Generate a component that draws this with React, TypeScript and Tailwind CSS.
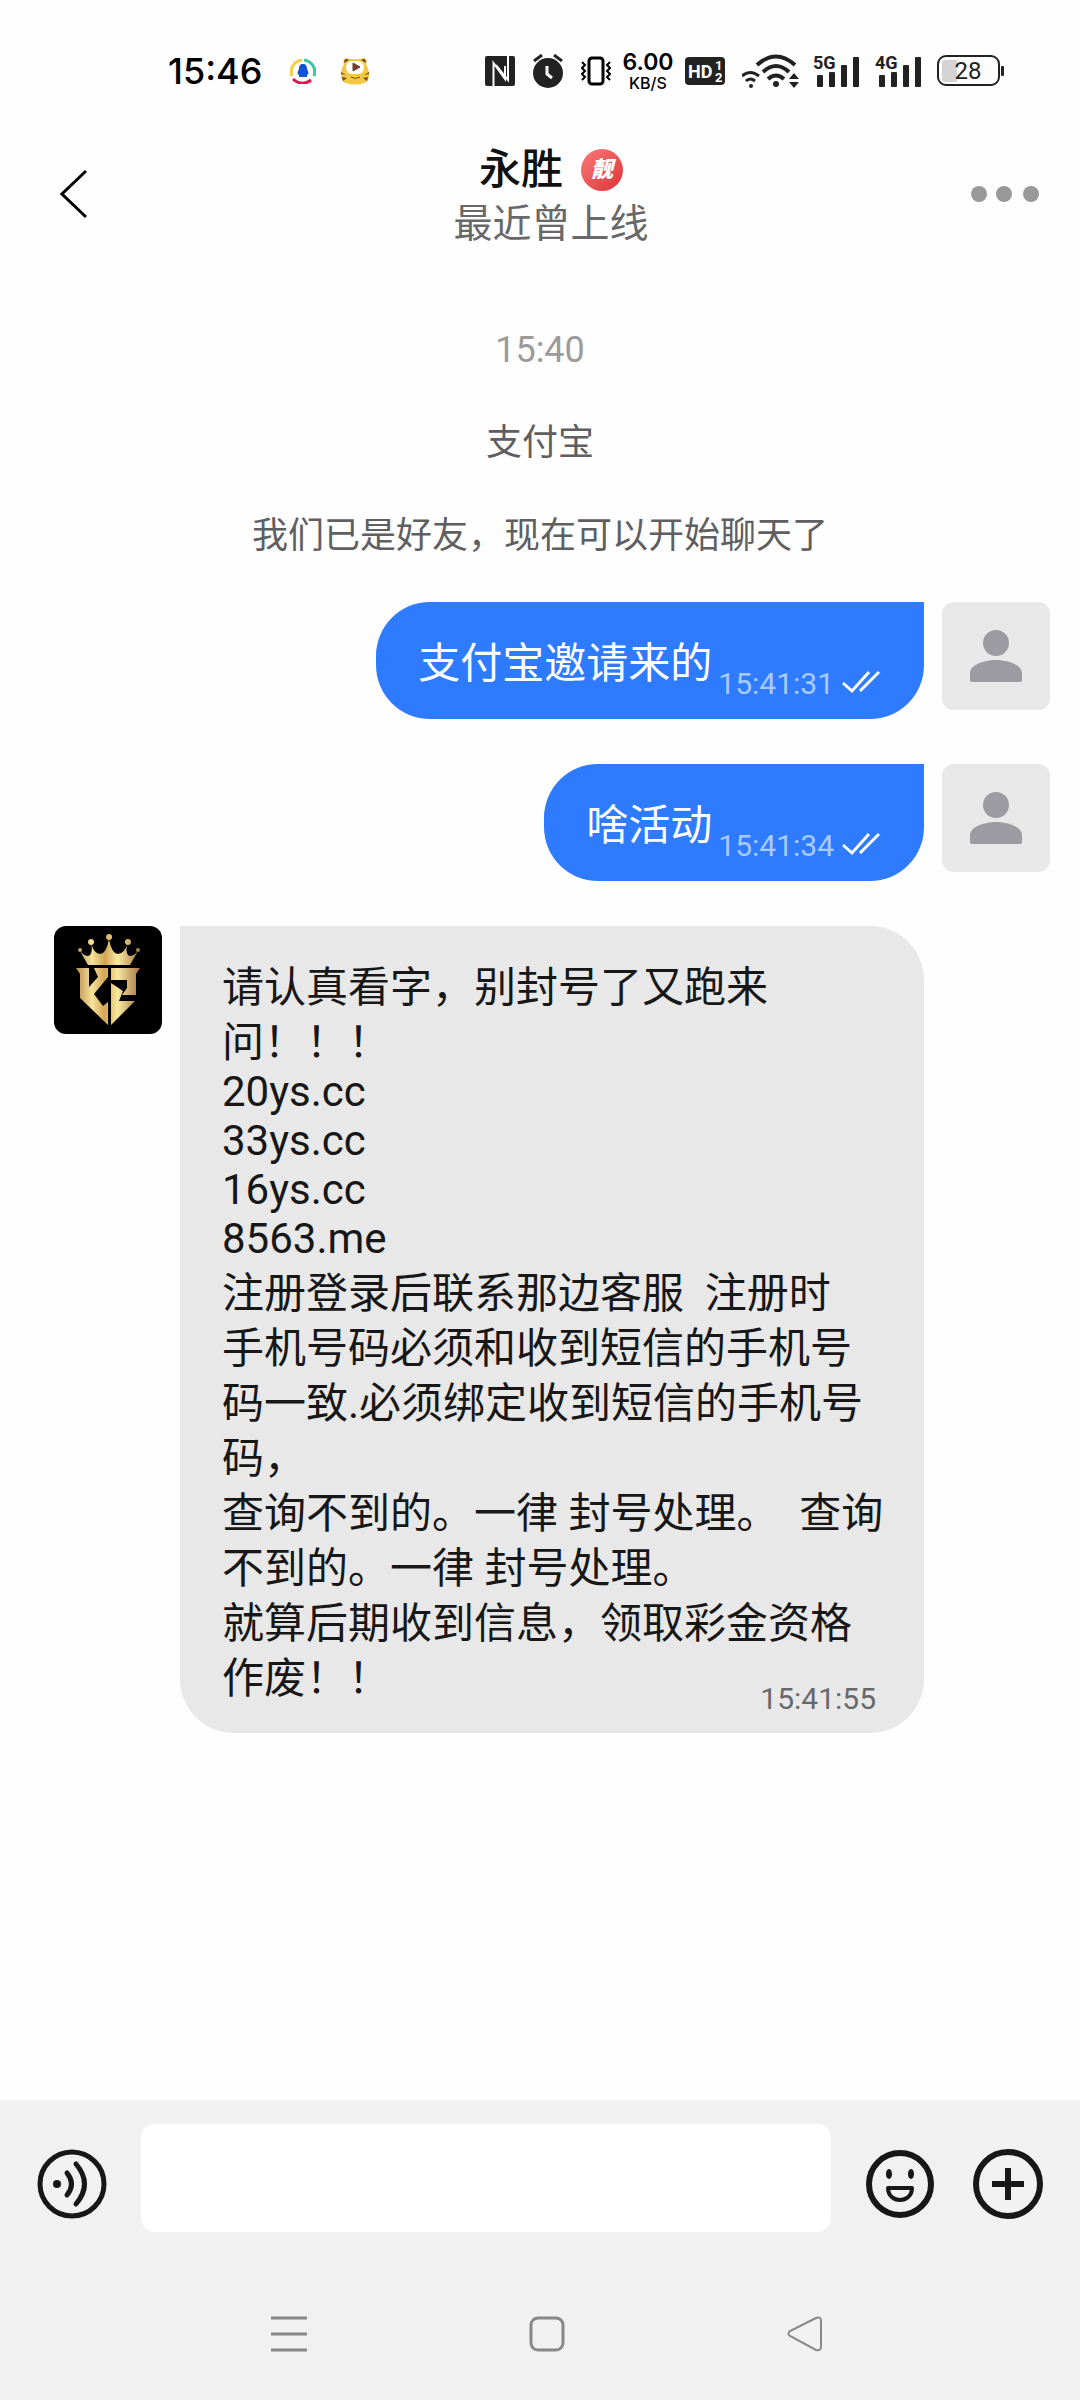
import { clsx } from "clsx"

const sentMessages = [
  { text: "支付宝邀请来的", time: "15:41:31" },
  { text: "啥活动", time: "15:41:34" },
]

const receivedLines = [
  "请认真看字，别封号了又跑来",
  "问！！！",
  "20ys.cc",
  "33ys.cc",
  "16ys.cc",
  "8563.me",
  "注册登录后联系那边客服  注册时",
  "手机号码必须和收到短信的手机号",
  "码一致.必须绑定收到短信的手机号",
  "码，",
  "查询不到的。一律 封号处理。  查询",
  "不到的。一律 封号处理。",
  "就算后期收到信息，领取彩金资格",
  "作废！！",
]

// latin-only lines sit tighter than chinese ones
const isLatin = (line: string) => /^[\x20-\x7e]+$/.test(line)

const Signal = ({ label }: { label: string }) => (
  <svg width="50" height="38" viewBox="0 -2 50 38" fill="#222">
    <text x="0" y="15" fontSize="18" fontWeight="700" fontFamily="Roboto, sans-serif">
      {label}
    </text>
    <rect x="4" y="21" width="6" height="12" rx="1" />
    <rect x="16" y="18" width="6" height="15" rx="1" />
    <rect x="28" y="11" width="6" height="22" rx="1" />
    <rect x="40" y="3" width="6" height="30" rx="1" />
  </svg>
)

const StatusBar = () => (
  <div className="flex h-[142px] items-center justify-between pl-[168px] pr-[76px]">
    <div className="flex items-center">
      <span className="w-[122px] font-['Inter'] text-[36px] font-medium leading-none text-black">15:46</span>
      <svg width="26" height="26" viewBox="0 0 26 26" fill="none" strokeWidth="3">
        <path d="M2 18A12 12 0 0 1 12 2" stroke="#f2cf45" />
        <path d="M14 2A12 12 0 0 1 24 18" stroke="#40c4a0" />
        <path d="M3 21A13 13 0 0 0 21 22" stroke="#e0184f" />
        <path d="M13 6c-3 0-4 2-4 5-1 2-2 4-1 6l1-1v3h8v-3l1 1c1-2 0-4-1-6 0-3-1-5-4-5z" fill="#1254d8" />
      </svg>
      <svg className="ml-6" width="30" height="28" viewBox="0 0 30 28">
        <path d="M4 7C2 2 5 0 9 2h12c4-2 7 0 5 5 3 5 4 12 2 16-3 6-23 6-26 0C0 19 1 12 4 7z" fill="#f5c842" />
        <path d="M4 6c0-4 2-5 5-3zM26 6c0-4-2-5-5-3zM1 15l5 3-5-1zM2 20l5 1-4 3zM29 15l-5 3 5-1zM28 20l-5 1 4 3z" fill="#76482a" />
        <rect x="6" y="4" width="18" height="13" rx="6" fill="#fff" />
        <path d="M13 6l7 4-7 4z" fill="#76402c" stroke="#76402c" strokeLinejoin="round" />
        <path d="M11 20q4 3 9 0" fill="none" stroke="#76402c" />
      </svg>
    </div>

    <div className="flex items-center gap-3">
      <svg width="36" height="30" viewBox="0 0 36 30">
        <rect width="30" height="30" rx="2" fill="#222" />
        <path d="M8.500 30V7L20 23V10M23 0v24L11 9" fill="none" stroke="#fff" strokeWidth="2" />
      </svg>
      <svg width="36" height="34" viewBox="0 0 36 34">
        <circle cx="15" cy="19" r="15" fill="#222" />
        <path d="M1 7l8-6M29 7l-8-6" stroke="#222" strokeWidth="3" />
        <path d="M14 12v8l5 4" fill="none" stroke="#fff" strokeWidth="3" />
      </svg>
      <svg width="30" height="30" viewBox="0 0 30 30" fill="none" stroke="#000">
        <rect x="8" y="2" width="14" height="26" rx="3" strokeWidth="3" />
        <path d="M1 7l3 3-3 3 3 3-3 3 3 3-3 3M29 7l-3 3 3 3-3 3 3 3-3 3 3 3" strokeWidth="2" transform="translate(0 -1)" />
      </svg>
      <div className="flex w-[50px] flex-col items-center font-['Inter'] text-black">
        <span className="text-[23px] font-semibold leading-[23px]">6.00</span>
        <span className="text-[16px] font-medium leading-[18px]">KB/S</span>
      </div>
      <svg width="45" height="28" viewBox="0 0 45 28" fontFamily="Roboto, sans-serif" fontWeight="700" fill="#fff">
        <rect width="40" height="28" rx="4" fill="#222" />
        <text x="3" y="21" fontSize="18">HD</text>
        <text x="30" y="13" fontSize="13">1</text>
        <text x="30" y="25" fontSize="13">2</text>
      </svg>
      <svg width="59" height="34" viewBox="0 0 59 34" fill="none" stroke="#222">
        <path d="M0 22q8-7 17 0M4 27q4-4 9 0" strokeWidth="3" />
        <circle cx="9" cy="32" r="2" fill="#222" stroke="none" />
        <path d="M15 11q19-17 38 0M21 18q13-12 26 0M26 25q8-7 16 0" strokeWidth="4" />
        <circle cx="34" cy="30" r="3" fill="#222" stroke="none" />
        <path d="M47 25l5-6 5 6zM47 28h10l-5 6z" fill="#222" stroke="none" />
      </svg>
      <Signal label="5G" />
      <Signal label="4G" />
      <svg width="67" height="32" viewBox="0 0 67 32">
        <rect x="1" y="1" width="61" height="29" rx="8" fill="none" stroke="#222" strokeWidth="2" />
        <path d="M8 5h12v22H8q-3 0-3-3V8q0-3 3-3z" fill="#d4d4d4" />
        <rect x="64" y="11" width="3" height="10" rx="1" fill="#222" />
        <text x="31" y="24" fontSize="24" textAnchor="middle" fontFamily="Roboto, sans-serif" fill="#222">28</text>
      </svg>
    </div>
  </div>
)

const Header = () => (
  <header className="flex h-[104px] items-center">
    <button aria-label="返回" className="flex w-[120px] justify-start pl-[60px]">
      <svg width="28" height="50" viewBox="0 0 28 50" fill="none" stroke="#000" strokeWidth="3">
        <path d="M26 2L2 25l24 23" />
      </svg>
    </button>
    <div className="flex flex-1 flex-col items-center pt-2">
      <h1 className="flex items-center gap-[18px] text-[42px] font-medium leading-[52px] text-[#111]">
        永胜
        <span className="flex h-[42px] w-[42px] items-center justify-center rounded-full bg-linear-to-br from-[#f87878] to-[#dc3038] text-[22px] font-black italic leading-none text-white">
          靓
        </span>
      </h1>
      <p className="text-[39px] leading-[56px] text-[#68686b]">最近曾上线</p>
    </div>
    <button aria-label="更多" className="w-[98px]">
      <svg className="-ml-3" width="70" height="16" viewBox="0 0 70 16" fill="#999">
        <circle cx="9" cy="8" r="8" />
        <circle cx="34" cy="8" r="8" />
        <circle cx="61" cy="8" r="8" />
      </svg>
    </button>
  </header>
)

const UserAvatar = () => (
  <div className="flex h-[108px] w-[108px] shrink-0 items-center justify-center rounded-[12px] bg-[#e8e8e8]">
    <svg width="52" height="52" viewBox="0 0 52 52" fill="#9b9ba1">
      <circle cx="26" cy="13" r="13" />
      <path d="M0 50V43C0 35 14 30 26 30s26 5 26 13v7q0 2-2 2H2q-2 0-2-2z" />
    </svg>
  </div>
)

const CrownAvatar = () => (
  <svg className="shrink-0 rounded-[12px] bg-black" width="108" height="108" viewBox="0 0 108 108">
    <defs>
      <linearGradient id="gold" gradientUnits="userSpaceOnUse" x1="22" y1="0" x2="86" y2="0">
        <stop offset="0" stopColor="#b98a4e" />
        <stop offset="0.25" stopColor="#f6e39a" />
        <stop offset="0.45" stopColor="#d2a456" />
        <stop offset="0.65" stopColor="#f8ea9f" />
        <stop offset="1" stopColor="#a87443" />
      </linearGradient>
    </defs>
    <g fill="url(#gold)">
      <circle cx="26" cy="24" r="2" />
      <circle cx="37" cy="16" r="3" />
      <circle cx="55" cy="11" r="3" />
      <circle cx="74" cy="16" r="3" />
      <circle cx="84" cy="24" r="2" />
      <path d="M34 39L26 25q6 7 10 4 3-4 1-12 3 11 9 11 7-1 9-16 2 15 9 16 6 0 10-11-3 8 0 12 4 3 10-4L76 39z" />
      <path d="M22 42h13v19l9-10-4-9h14v9L40 68l9 12 5-4v23L26 72V48z" />
      <path d="M57 42h29l-4 6v21H68l5-7v-8H57zM57 57l12 8-4 10h16L57 99z" />
    </g>
  </svg>
)

export default function App() {
  return (
    <div className="flex min-h-screen flex-col bg-[#fefefe] font-['Roboto','Noto_Sans_CJK_SC',sans-serif]">
      <StatusBar />
      <Header />

      <main className="flex-1 pb-8">
        <div className="flex flex-col items-center gap-[41px] pb-10 pt-[78px] text-[36px] leading-[52px] text-[#5f5f62]">
          <time className="text-[#9b9b9b]">15:40</time>
          <p>支付宝</p>
          <p>我们已是好友，现在可以开始聊天了</p>
        </div>

        <div className="flex flex-col gap-[45px]">
          {sentMessages.map((msg) => (
            <div key={msg.time} className="flex justify-end gap-[18px] pr-[30px]">
              <div className="flex h-[117px] items-center rounded-[54px] rounded-tr-none bg-[#2e7bff] pl-[42px] pr-[44px] pt-[6px]">
                <p className="text-[42px] leading-[55px] text-white">{msg.text}</p>
                <time className="ml-[6px] mt-10 text-[30px] leading-9 text-[#a9caff]">{msg.time}</time>
                <svg className="ml-2 mt-9" width="38" height="24" viewBox="0 0 38 24" fill="none" stroke="#fff" strokeWidth="3">
                  <path d="M1 13l9 8L27 2M18 21L37 2" />
                </svg>
              </div>
              <UserAvatar />
            </div>
          ))}

          <div className="flex gap-[18px] pl-[54px] pr-[156px]">
            <CrownAvatar />
            <div className="relative flex-1 rounded-[54px] rounded-tl-none bg-[#e8e8e8] pb-[27px] pl-[42px] pt-[34px] text-[42px] text-[#171717]">
              {receivedLines.map((line) => (
                <p key={line} className={clsx("whitespace-pre", isLatin(line) ? "pb-[6px] leading-[43px]" : "leading-[55px]")}>
                  {line}
                </p>
              ))}
              <time className="absolute bottom-4 right-12 text-[30px] leading-9 text-[#68686b]">15:41:55</time>
            </div>
          </div>
        </div>
      </main>

      <footer className="bg-[#f1f1f1] pt-6">
        <div className="flex items-center px-9">
          <button aria-label="语音" className="w-[105px] shrink-0 pt-3">
            <svg width="72" height="72" viewBox="0 0 72 72" fill="none" stroke="#171717" strokeWidth="5" strokeLinecap="round">
              <circle cx="36" cy="36" r="32" />
              <circle cx="21" cy="36" r="4" fill="#171717" stroke="none" />
              <path d="M31 25q9 11 0 22M40 16q17 20 0 40" />
            </svg>
          </button>
          <input aria-label="消息" className="h-[108px] min-w-0 flex-1 rounded-[14px] bg-white px-6 text-[42px] outline-none" />
          <button aria-label="表情" className="ml-[33px] shrink-0 pt-3">
            <svg width="72" height="72" viewBox="0 0 72 72" fill="none" stroke="#171717">
              <circle cx="36" cy="36" r="31" strokeWidth="6" />
              <ellipse cx="25" cy="26" rx="3" ry="5" fill="#171717" stroke="none" />
              <ellipse cx="47" cy="26" rx="3" ry="5" fill="#171717" stroke="none" />
              <path d="M24 40h24c0 16-24 16-24 0z" strokeWidth="4" strokeLinejoin="round" />
            </svg>
          </button>
          <button aria-label="添加" className="ml-9 shrink-0 pt-3">
            <svg width="72" height="72" viewBox="0 0 72 72" fill="none" stroke="#171717" strokeWidth="6">
              <circle cx="36" cy="36" r="32" />
              <path d="M20 36h32M36 20v32" />
            </svg>
          </button>
        </div>

        <nav className="grid grid-cols-3 justify-items-center pb-12 pl-[160px] pr-[146px] pt-[84px]">
          <button aria-label="最近任务">
            <svg width="36" height="36" viewBox="0 0 36 36" stroke="#888" strokeWidth="3">
              <path d="M0 2h36M0 18h36M0 34h36" />
            </svg>
          </button>
          <button aria-label="主页">
            <svg width="36" height="36" viewBox="0 0 36 36" fill="none" stroke="#888" strokeWidth="3">
              <rect x="2" y="2" width="32" height="32" rx="7" />
            </svg>
          </button>
          <button aria-label="后退">
            <svg width="36" height="36" viewBox="0 0 36 36" fill="none" stroke="#888" strokeWidth="2">
              <path d="M29 2L3 15q-3 3 0 5l26 14q5 1 5-3V5q0-5-5-3z" />
            </svg>
          </button>
        </nav>
      </footer>
    </div>
  )
}
